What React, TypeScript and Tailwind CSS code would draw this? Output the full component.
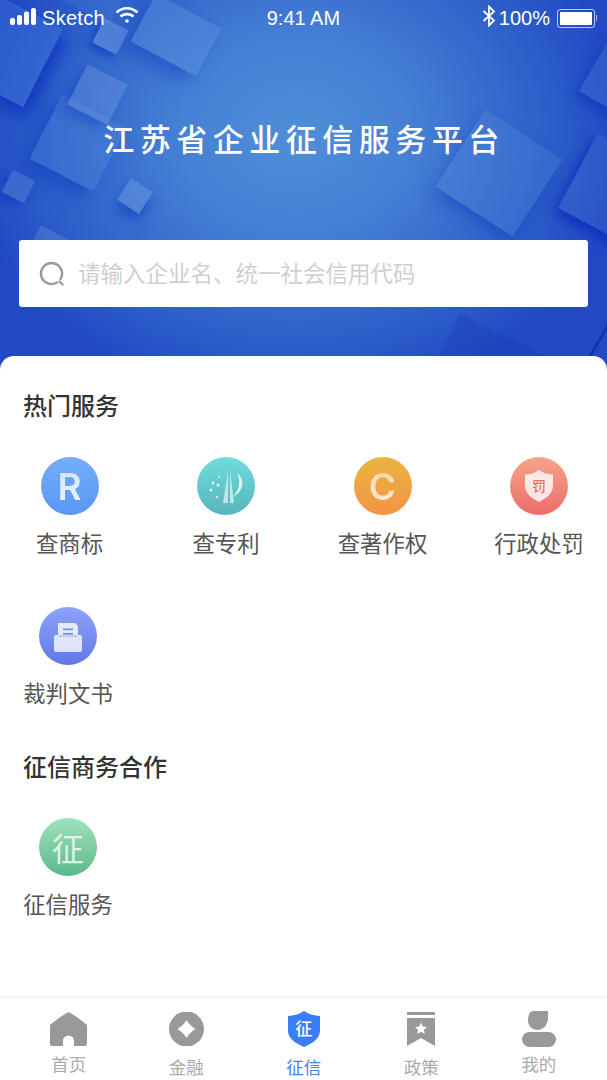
import type { ReactNode } from "react";

const cjk = "font-['Noto_Sans_CJK_SC','Noto_Sans',sans-serif]";

function StatusBar() {
	return (
		<div className="relative flex h-[36px] items-center justify-between pl-[10px] pr-[10px] font-['Liberation_Sans',sans-serif] text-[20px] leading-[24px] text-white">
			<div className="flex w-[140px] items-center">
				<svg width="27" height="18" viewBox="0 0 27 18" className="mb-[3px]" fill="white">
					<rect x="0" y="10" width="5" height="7" rx="2" />
					<rect x="7" y="7" width="5" height="10" rx="2" />
					<rect x="14" y="3.5" width="5" height="13.5" rx="2" />
					<rect x="21" y="0" width="5" height="17" rx="2" />
				</svg>
				<span className="ml-[5px] tracking-[0.3px]">Sketch</span>
				<svg width="24" height="18" viewBox="0 0 24 18" className="mb-[6px] ml-[10px]" fill="none" stroke="white" strokeWidth="2.6">
					<path d="M1.5 6.5C7.5 0.8 16.5 0.8 22.5 6.5" />
					<path d="M5.5 10.5C9 7.3 15 7.3 18.5 10.5" />
					<circle cx="12" cy="15" r="1.8" fill="white" stroke="none" />
				</svg>
			</div>
			<span className="ml-[-25px]">9:41 AM</span>
			<div className="flex items-center">
				<svg width="14" height="22" viewBox="0 0 14 22" className="mb-[4px]" fill="none" stroke="white" strokeWidth="1.8">
					<path d="M1.5 6L12 15.5L7 20.5V1.5L12 6.5L1.5 16" />
				</svg>
				<span className="ml-[3px]">100%</span>
				<div className="ml-[7px] flex items-center">
					<div className="h-[19px] w-[38px] rounded-[3px] border border-white/70 p-[2px]">
						<div className="h-full w-full rounded-[1px] bg-white" />
					</div>
					<div className="ml-[1px] h-[6px] w-[1px] bg-white/60" />
				</div>
			</div>
		</div>
	);
}

function Header() {
	return (
		<div className="relative h-[372px] overflow-hidden bg-[radial-gradient(ellipse_330px_270px_at_295px_135px,#4f8ed8_0%,#4680d5_35%,#2f63cb_72%,#2149c4_100%)]">
			{/* squares behind the title */}
			<div className="absolute left-[50px] top-[-20px] h-[30px] w-[70px] rotate-[27deg] bg-[#4f83d8]/25" />
			<div className="absolute left-[139px] top-[8px] h-[54px] w-[74px] rotate-[28deg] bg-[#6a9ae0]/30 shadow-[-6px_10px_18px_rgba(14,58,190,0.45)]" />
			<div className="absolute left-[-40px] top-[4px] h-[88px] w-[88px] rotate-[27deg] bg-[#3f76dc]/40 shadow-[8px_8px_16px_rgba(10,48,190,0.8)]" />
			<div className="absolute left-[42px] top-[107px] h-[72px] w-[72px] rotate-[27deg] bg-[#6a9ae0]/20 shadow-[-6px_12px_18px_rgba(14,58,190,0.5)]" />
			<div className="absolute left-[97px] top-[23px] h-[27px] w-[27px] rotate-[27deg] bg-[#7ea6e4]/40 shadow-[-3px_6px_10px_rgba(10,48,190,0.6)]" />
			<div className="absolute left-[75px] top-[72px] h-[45px] w-[45px] rotate-[27deg] bg-[#7ea6e4]/30 shadow-[-4px_8px_12px_rgba(14,58,190,0.4)]" />
			<div className="absolute left-[6px] top-[174px] h-[25px] w-[25px] rotate-[27deg] bg-[#7ea6e4]/25 shadow-[-3px_6px_10px_rgba(10,48,190,0.5)]" />
			<div className="absolute left-[122px] top-[183px] h-[26px] w-[26px] rotate-[33deg] bg-[#7ea6e4]/35 shadow-[3px_8px_12px_rgba(10,48,190,0.5)]" />
			<div className="absolute left-[28px] top-[233px] h-[45px] w-[45px] rotate-[27deg] bg-[#7ea6e4]/25" />
			<div className="absolute left-[453px] top-[127px] h-[92px] w-[92px] rotate-[33deg] bg-[#6a9ae0]/20 shadow-[2px_8px_16px_rgba(14,58,190,0.45)]" />
			<div className="absolute left-[590px] top-[50px] h-[60px] w-[60px] rotate-[30deg] bg-[#4f83d8]/25 shadow-[-2px_8px_12px_rgba(10,48,190,0.55)]" />
			<div className="absolute left-[573px] top-[148px] h-[85px] w-[85px] rotate-[28deg] bg-[#4f83d8]/20 shadow-[-3px_8px_12px_rgba(10,40,185,0.7)]" />
			<div className="absolute left-[440px] top-[340px] h-[60px] w-[130px] rotate-[27deg] bg-[#1b3fb5]/35" />
			<div className="absolute left-[595px] top-[320px] h-[50px] w-[3px] rotate-[30deg] bg-[#0f34b8]" />

			<div className="relative flex flex-col">
				<StatusBar />
				<h1 className={`${cjk} mt-[84px] pl-[1px] text-center text-[31px] font-medium leading-[36px] tracking-[5.5px] text-white`}>
					江苏省企业征信服务平台
				</h1>
				<div className="mx-[19px] mt-[84px] flex h-[67px] items-center rounded-[3px] bg-white pl-[20px]">
					<svg width="26" height="26" viewBox="0 0 26 26" fill="none" stroke="#9a9a9a" strokeWidth="2.4" strokeLinecap="round">
						<path d="M18 21.5A10.5 10.5 0 1 1 21.5 18" />
						<path d="M20.5 20.5L23.5 23.5" />
					</svg>
					<input
						readOnly
						placeholder="请输入企业名、统一社会信用代码"
						className={`${cjk} mb-[4px] ml-[13px] flex-1 bg-transparent text-[22.5px] leading-[30px] outline-none placeholder:text-[#cfcfcf]`}
					/>
				</div>
			</div>
		</div>
	);
}

function Service({ circle, label, children }: { circle: string; label: string; children: ReactNode }) {
	return (
		<div className="flex w-[90px] flex-col items-center">
			<div className={`flex h-[58px] w-[58px] items-center justify-center overflow-hidden rounded-full ${circle}`}>{children}</div>
			<span className={`${cjk} mt-[16px] whitespace-nowrap text-[22.4px] leading-[22px] text-[#555555]`}>{label}</span>
		</div>
	);
}

function Heading({ className, children }: { className: string; children: ReactNode }) {
	return <h2 className={`${cjk} text-[24px] font-medium leading-[24px] text-[#333333] ${className}`}>{children}</h2>;
}

function Card() {
	return (
		<div className="relative mt-[-16px] flex-1 rounded-t-[14px] bg-white">
			<Heading className="pl-[23px] pt-[37px]">热门服务</Heading>
			<div className="mt-[40px] flex gap-[66.5px] pl-[24.5px]">
				<Service circle="bg-gradient-to-b from-[#74adfb] to-[#5a96f5]" label="查商标">
					<span className="bg-gradient-to-b from-white/70 to-white/90 bg-clip-text font-['Inter',sans-serif] text-[37px] font-semibold leading-none text-transparent">R</span>
				</Service>
				<Service circle="bg-gradient-to-b from-[#70dcdc] to-[#58b4bc]" label="查专利">
					<svg width="58" height="58" viewBox="0 0 58 58">
						<path d="M31 15L26 46H31Z" fill="white" fillOpacity="0.6" />
						<path d="M33 13V46H37Z" fill="white" fillOpacity="0.6" />
						<path d="M40 16C48 22 47 34 36 40C43 32 44 24 40 16Z" fill="white" fillOpacity="0.85" />
						<circle cx="16" cy="26" r="1.4" fill="white" fillOpacity="0.8" />
						<circle cx="22" cy="20" r="1" fill="white" fillOpacity="0.7" />
						<circle cx="21" cy="28" r="1.6" fill="white" fillOpacity="0.8" />
						<circle cx="14" cy="33" r="1.4" fill="white" fillOpacity="0.8" />
						<circle cx="20" cy="40" r="1.3" fill="white" fillOpacity="0.7" />
					</svg>
				</Service>
				<Service circle="bg-gradient-to-b from-[#e8b443] to-[#f39443]" label="查著作权">
					<span className="bg-gradient-to-b from-white/55 to-white/80 bg-clip-text font-['Inter',sans-serif] text-[37px] font-semibold leading-none text-transparent">C</span>
				</Service>
				<Service circle="bg-gradient-to-b from-[#f4a48c] to-[#ee6b68]" label="行政处罚">
					<div className="relative flex h-[32px] w-[28px] items-center justify-center">
						<svg width="28" height="32" viewBox="0 0 28 32" className="absolute inset-0">
							<path d="M14 0C18 3 23 4.5 28 4.5V16C28 24 20 29 14 32C8 29 0 24 0 16V4.5C5 4.5 10 3 14 0Z" fill="white" fillOpacity="0.8" />
						</svg>
						<span className={`${cjk} relative mb-[2px] text-[14px] font-medium leading-none text-[#ec6f66]`}>罚</span>
					</div>
				</Service>
			</div>
			<div className="mt-[54px] flex pl-[23px]">
				<Service circle="bg-gradient-to-b from-[#8ea2f8] to-[#6079e6]" label="裁判文书">
					<svg width="58" height="58" viewBox="0 0 58 58">
						<path d="M19 16H36L39 19V28H19Z" fill="white" fillOpacity="0.8" />
						<rect x="24" y="21.5" width="10" height="1.6" fill="#7088ee" />
						<rect x="24" y="26" width="10" height="1.6" fill="#7088ee" />
						<path d="M15 30C15 29 16 28 17 28H19V30H39V28H41C42 28 43 29 43 30V43C43 44 42 45 41 45H17C16 45 15 44 15 43Z" fill="white" fillOpacity="0.78" />
						<rect x="19" y="28" width="20" height="2" fill="white" fillOpacity="0.55" />
					</svg>
				</Service>
			</div>
			<Heading className="mt-[51px] pl-[23px]">征信商务合作</Heading>
			<div className="mt-[40px] flex pl-[23px]">
				<Service circle="bg-gradient-to-b from-[#a0e2bc] to-[#57b98c]" label="征信服务">
					<span className={`${cjk} text-[32px] leading-none text-white/75`}>征</span>
				</Service>
			</div>
		</div>
	);
}

function Tab({ label, active, labelTop, children }: { label: string; active?: boolean; labelTop: string; children: ReactNode }) {
	return (
		<div className="flex w-[117.5px] flex-col items-center">
			<div className="flex h-[36px] items-center justify-center">{children}</div>
			<span className={`${cjk} ${labelTop} text-[17.5px] leading-[20px] ${active ? "text-[#3f83f6]" : "text-[#ababab]"}`}>{label}</span>
		</div>
	);
}

function TabBar() {
	return (
		<div className="flex h-[84px] border-t-2 border-[#f3f3f3] bg-white pl-[10px] pt-[13px]">
			<Tab label="首页" labelTop="mt-[7px]">
				<svg width="37" height="34" viewBox="0 0 37 34" fill="#999999">
					<path d="M18.5 0L26 4.5L36 12C36.6 12.5 37 13 37 14V32C37 33 36 34 35 34H24V29C24 22 13 22 13 29V34H2C1 34 0 33 0 32V14C0 13 0.4 12.5 1 12L11 4.5Z" />
				</svg>
			</Tab>
			<Tab label="金融" labelTop="mt-[10px]">
				<svg width="35" height="34" viewBox="0 0 35 34">
					<circle cx="17.5" cy="17" r="17.5" fill="#999999" />
					<path d="M17.5 8C19 11 22 14 26.5 17C22 20 19 23 17.5 26C16 23 13 20 8.5 17C13 14 16 11 17.5 8Z" fill="white" />
				</svg>
			</Tab>
			<Tab label="征信" active labelTop="mt-[10px]">
				<div className="relative flex h-[36px] w-[32px] items-center justify-center">
					<svg width="32" height="36" viewBox="0 0 32 36" className="absolute inset-0">
						<path d="M16 0C20 3 26 4.5 32 5V20C32 28 23 33 16 36C9 33 0 28 0 20V5C6 4.5 12 3 16 0Z" fill="#3b7df6" />
					</svg>
					<span className={`${cjk} relative mb-[4px] text-[17px] font-medium leading-none text-white`}>征</span>
				</div>
			</Tab>
			<Tab label="政策" labelTop="mt-[10px]">
				<svg width="28" height="34" viewBox="0 0 28 34" fill="#999999">
					<rect x="0" y="0" width="28" height="3" />
					<path d="M0 6H28V34L14 26L0 34Z" />
					<path d="M14 10.5L15.8 14.4L20 14.9L16.9 17.7L17.8 21.9L14 19.8L10.2 21.9L11.1 17.7L8 14.9L12.2 14.4Z" fill="white" />
				</svg>
			</Tab>
			<Tab label="我的" labelTop="mt-[7px]">
				<svg width="34" height="36" viewBox="0 0 34 36" fill="#999999">
					<path d="M11 0H26V7C26 14 21 19 15.5 19C10 19 6 14.5 6 9.5C6 4 8 0 11 0Z" />
					<rect x="0" y="21" width="34" height="15" rx="7.5" />
				</svg>
			</Tab>
		</div>
	);
}

export default function App() {
	return (
		<div className="flex h-[1080px] w-[607px] flex-col overflow-hidden bg-white">
			<Header />
			<Card />
			<TabBar />
		</div>
	);
}
